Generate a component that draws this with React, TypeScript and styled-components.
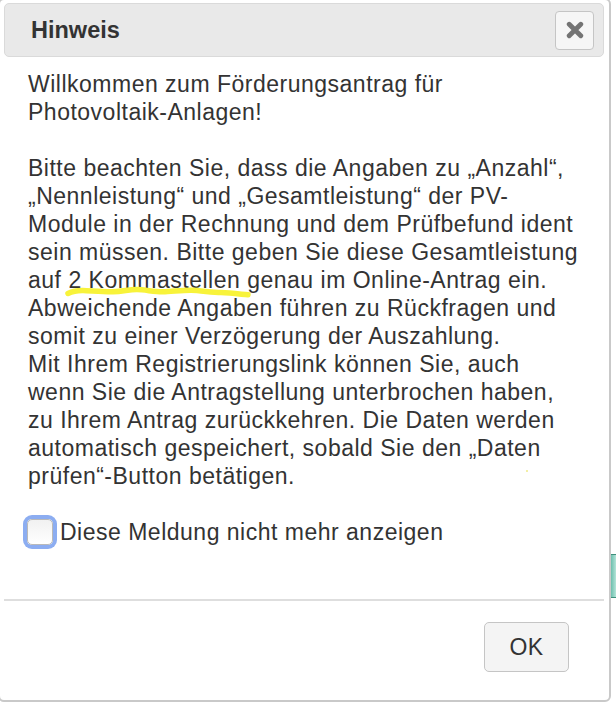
import React, { useState } from 'react'
import styled, { createGlobalStyle } from 'styled-components'

const GlobalStyle = createGlobalStyle`
  html, body {
    margin: 0;
    padding: 0;
    background: #fff;
    overflow: hidden;
  }
  body {
    font-family: "Liberation Sans", Arial, Helvetica, sans-serif;
    color: #333;
  }
`

const Page = styled.div`
  display: flex;
  align-items: flex-start;
  width: 616px;
  height: 702px;
  overflow: hidden;
`

const Dialog = styled.div`
  flex: none;
  box-sizing: border-box;
  width: 613px;
  height: 704px;
  margin: -2px 0 0 -2px;
  padding: 3px 5px 0 4px;
  border: 2px solid #c9c9c9;
  border-radius: 6px;
  background: #fff;
  display: flex;
  flex-direction: column;
`

const TitleBar = styled.div`
  box-sizing: border-box;
  height: 54px;
  display: flex;
  align-items: center;
  justify-content: space-between;
  padding: 0 9px 0 26px;
  background: #e9e9e9;
  border: 1px solid #dadada;
  border-radius: 5px;
`

const Title = styled.span`
  font-size: 23.5px;
  font-weight: 700;
  color: #333;
`

const CloseButton = styled.button`
  box-sizing: border-box;
  width: 39px;
  height: 39px;
  padding: 0;
  display: flex;
  align-items: center;
  justify-content: center;
  background: #f6f6f6;
  border: 1px solid #c5c5c5;
  border-radius: 4px;
  cursor: pointer;
`

const Content = styled.div`
  position: relative;
  padding: 13px 0 0 24px;
  font-size: 23px;
  letter-spacing: 0.5px;
  line-height: 28px;
`

const Line = styled.div`
  white-space: nowrap;
  min-height: 28px;
`

const Marked = styled.span`
  position: relative;
`

const MarkStroke = styled.svg`
  position: absolute;
  left: -1px;
  top: 21px;
  overflow: visible;
  pointer-events: none;
`

const Speck = styled.span`
  position: absolute;
  left: 522px;
  top: 413px;
  width: 2px;
  height: 2px;
  background: #f3efa6;
`

const CheckRow = styled.label`
  display: flex;
  align-items: center;
  gap: 7px;
  margin: 28px 0 0 -1px;
  cursor: pointer;
`

const Box = styled.span<{ $checked: boolean }>`
  box-sizing: border-box;
  width: 26px;
  height: 26px;
  border: 1px solid #b9b9b9;
  border-radius: 5px;
  background: ${({ $checked }) => ($checked ? '#3b82f6' : 'linear-gradient(#f1f1f1, #fff)')};
  box-shadow: 0 0 0 4px #8cadf1;
`

const Divider = styled.div`
  height: 2px;
  background: #dedede;
  margin-top: 53px;
`

const Footer = styled.div`
  display: flex;
  justify-content: flex-end;
  padding: 21px 35px 0 0;
`

const OkButton = styled.button`
  box-sizing: border-box;
  width: 85px;
  height: 50px;
  font-family: "Liberation Sans", Arial, sans-serif;
  font-size: 23px;
  letter-spacing: 0.5px;
  color: #333;
  background: #f4f4f4;
  border: 1px solid #c5c5c5;
  border-radius: 5px;
  cursor: pointer;
`

const Aside = styled.div`
  flex: 1;
  padding-top: 554px;
`

const TealTab = styled.div`
  height: 42px;
  border-top: 1px solid #3f8f7c;
  border-bottom: 1px solid #3f8f7c;
  background: linear-gradient(90deg, #6cbfae, #b4e4d8);
`

const lines = [
  'Willkommen zum Förderungsantrag für',
  'Photovoltaik-Anlagen!',
  '',
  'Bitte beachten Sie, dass die Angaben zu „Anzahl“,',
  '„Nennleistung“ und „Gesamtleistung“ der PV-',
  'Module in der Rechnung und dem Prüfbefund ident',
  'sein müssen. Bitte geben Sie diese Gesamtleistung',
  null,
  'Abweichende Angaben führen zu Rückfragen und',
  'somit zu einer Verzögerung der Auszahlung.',
  'Mit Ihrem Registrierungslink können Sie, auch',
  'wenn Sie die Antragstellung unterbrochen haben,',
  'zu Ihrem Antrag zurückkehren. Die Daten werden',
  'automatisch gespeichert, sobald Sie den „Daten',
  'prüfen“-Button betätigen.',
]

const App = () => {
  const [hide, setHide] = useState(false)

  return (
    <>
      <GlobalStyle />
      <Page>
        <Dialog>
          <TitleBar>
            <Title>Hinweis</Title>
            <CloseButton aria-label="Schließen">
              <svg width="18" height="18" viewBox="0 0 18 18">
                <path d="M3.2 3.2 L14.8 14.8 M14.8 3.2 L3.2 14.8" stroke="#747474" strokeWidth="4.8" strokeLinecap="round" />
              </svg>
            </CloseButton>
          </TitleBar>
          <Content>
            {lines.map((l, i) =>
              l === null ? (
                <Line key={i}>
                  auf{' '}
                  <Marked>
                    2 Kommastellen
                    <MarkStroke width="186" height="10">
                      <path
                        d="M1 5.5 C 6 3, 10 2.4, 16 2.5 S 36 4, 46 3.8 S 62 1.5, 70 1.6 S 88 4, 96 3.8 S 116 2.2, 124 2.3 S 144 4.2, 154 4.6 S 174 6.2, 181 6.8"
                        fill="none"
                        stroke="#f8f33a"
                        strokeWidth="5.5"
                        strokeLinecap="round"
                      />
                    </MarkStroke>
                  </Marked>{' '}
                  genau im Online-Antrag ein.
                </Line>
              ) : (
                <Line key={i}>{l}</Line>
              )
            )}
            <Speck />
            <CheckRow onClick={() => setHide(!hide)}>
              <Box $checked={hide} />
              Diese Meldung nicht mehr anzeigen
            </CheckRow>
          </Content>
          <Divider />
          <Footer>
            <OkButton>OK</OkButton>
          </Footer>
        </Dialog>
        <Aside>
          <TealTab />
        </Aside>
      </Page>
    </>
  )
}

export default App
